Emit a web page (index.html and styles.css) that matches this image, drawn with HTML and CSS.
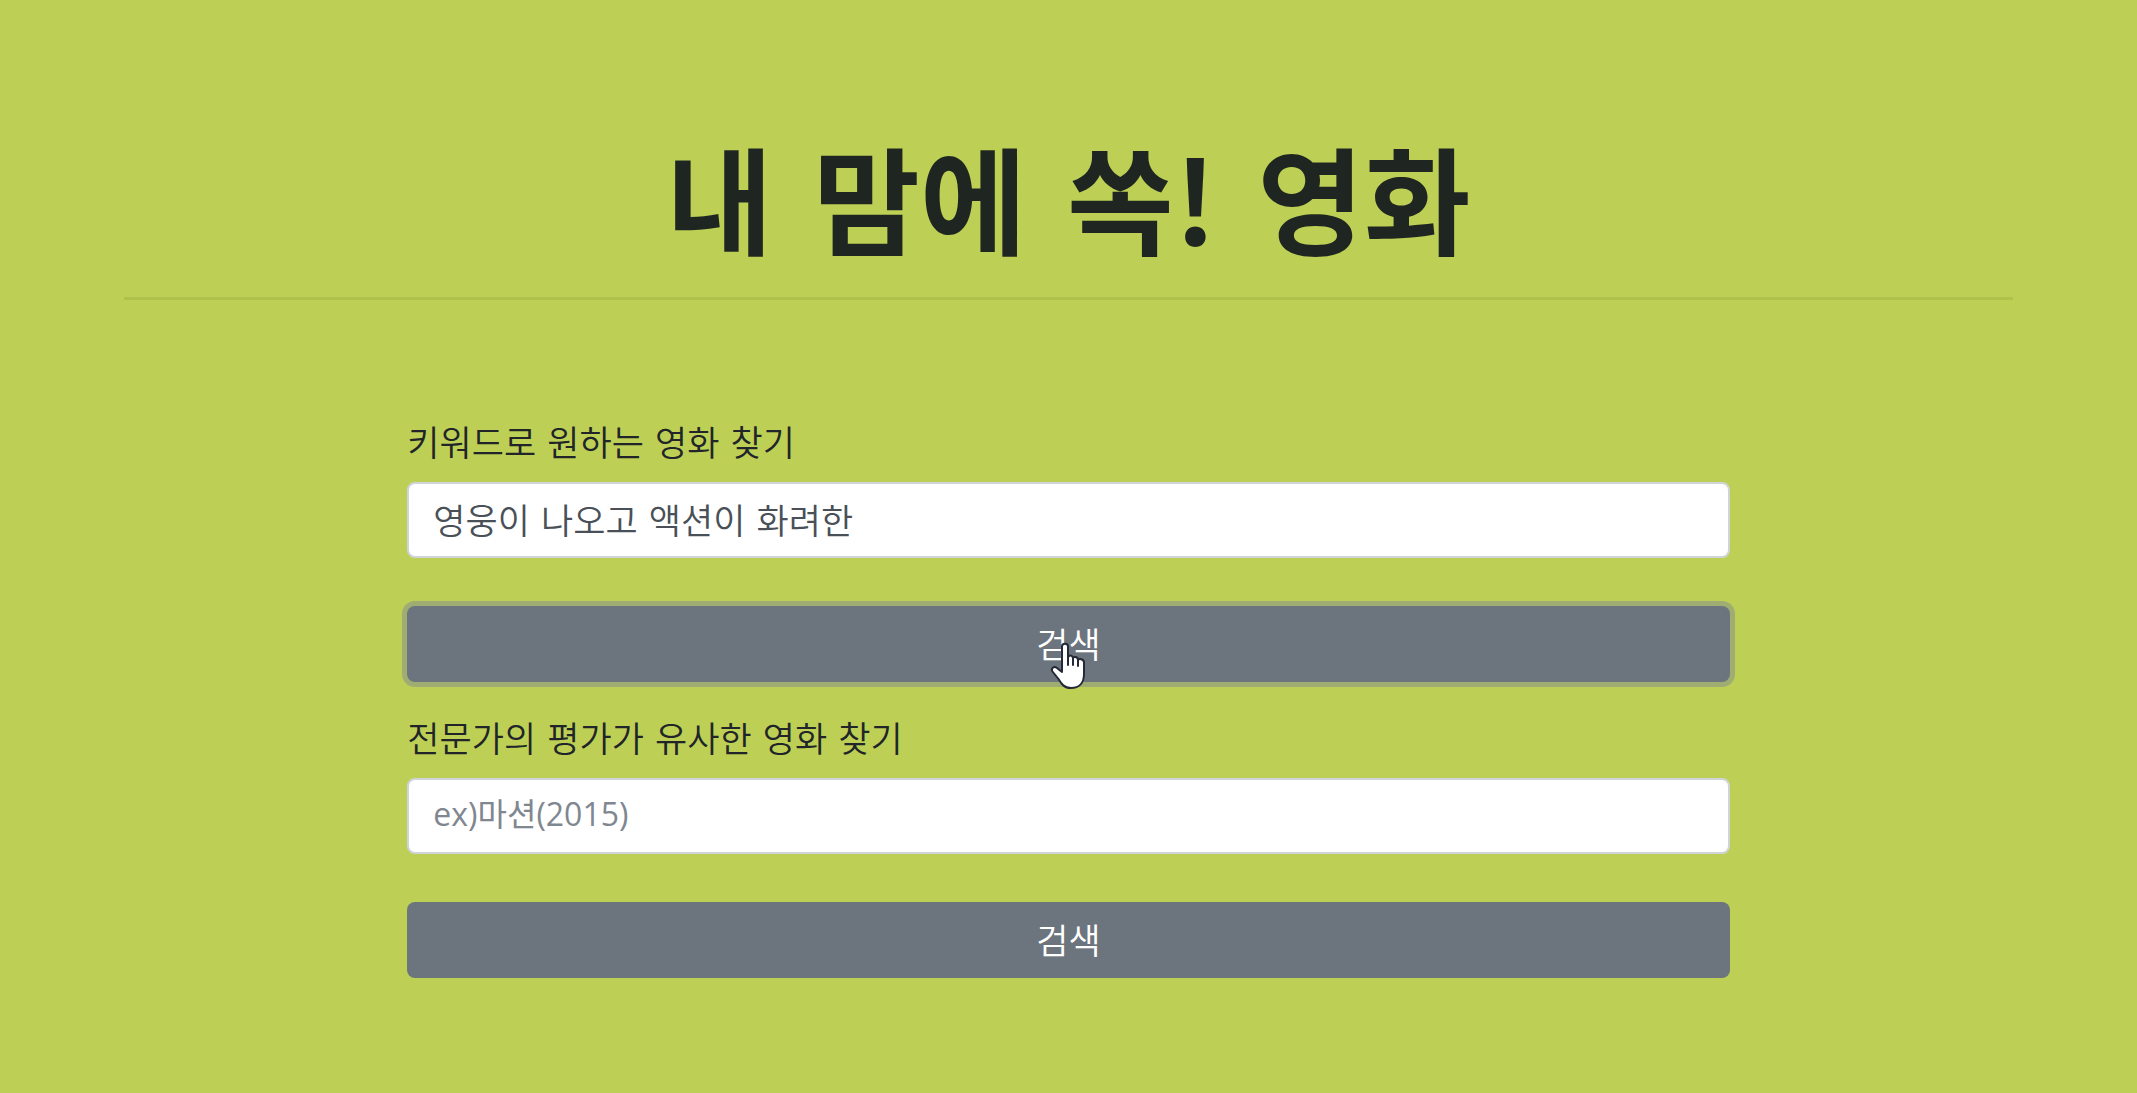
FILE: index.html
```html
<!DOCTYPE html>
<html lang="ko">
<head>
<meta charset="utf-8">
<meta name="viewport" content="width=device-width, initial-scale=1">
<title>내 맘에 쏙! 영화</title>
<link rel="stylesheet" href="styles.css">
</head>
<body>
<main class="page">
  <h1 class="title">내 맘에 쏙<span class="mark">!</span> 영화</h1>
  <hr class="divider">
  <div class="searches">
    <form class="search">
      <label class="label" for="keyword">키워드로 원하는 영화 찾기</label>
      <input class="field" id="keyword" type="text" value="영웅이 나오고 액션이 화려한">
      <button class="button button-focused" type="button">검색
        <svg class="pointer" viewBox="0 0 38 48" aria-hidden="true">
          <path d="M12 4.500C12 .8 18 .8 18 4.500V16C18 12.500 23 13 23 16.500C23.500 14 28 14.500 28 18C29 16 34 17 34 20.500V32C34 41 29 46 21 46C14 46 11.500 42 8.500 37L2.500 29.500C.5 26.500 4 23.500 7 26L12 30Z" fill="#fff" stroke="#252836" stroke-width="2" stroke-linejoin="round"/>
          <path d="M18 15V23M23 16.500V23M28 18V24" fill="none" stroke="#252836" stroke-width="2" stroke-linecap="round"/>
        </svg>
      </button>
    </form>
    <form class="search">
      <label class="label" for="movie">전문가의 평가가 유사한 영화 찾기</label>
      <input class="field" id="movie" type="text" placeholder="ex)마션(2015)">
      <button class="button" type="button">검색</button>
    </form>
  </div>
</main>
</body>
</html>
```
FILE: styles.css
```css
* {
  box-sizing: border-box;
}

body {
  margin: 0;
  min-height: 100vh;
  background: #bdd055;
  color: #212529;
  font-family: "DejaVu Sans", "Noto Sans CJK KR", sans-serif;
  font-size: 35px;
  font-weight: 350;
  line-height: 48px;
}

.page {
  padding: 136px 124px 64px;
}

.title {
  margin: 0;
  color: #1f2622;
  font-size: 116px;
  line-height: 140px;
  font-weight: 700;
  text-align: center;
}

.mark {
  font-family: "Noto Sans CJK KR", sans-serif;
  line-height: 1;
}

.divider {
  height: 3px;
  margin: 21px 0 0;
  border: 0;
  background: #afc14b;
}

.searches {
  display: flex;
  flex-direction: column;
  gap: 34px;
  width: 70%;
  margin: 120px auto 0;
}

.search {
  display: flex;
  flex-direction: column;
}

.label {
  margin-bottom: 14px;
}

.field {
  width: 100%;
  height: 76px;
  margin-bottom: 48px;
  padding: 0 24px 4px;
  border: 2px solid #ced4da;
  border-radius: 8px;
  background: #fff;
  color: #495057;
  font: inherit;
}

.field::placeholder {
  color: #7f8790;
  opacity: 1;
  font-family: "Open Sans", "Noto Sans CJK KR", sans-serif;
  font-size: 32px;
  font-weight: 400;
}

.button {
  position: relative;
  height: 76px;
  padding: 4px 0 0;
  border: 0;
  border-radius: 8px;
  background: #6c757d;
  color: #fff;
  font: inherit;
  cursor: pointer;
}

.button-focused {
  box-shadow: 0 0 0 5px rgba(130, 138, 145, 0.5);
}

/* hand pointer resting on the button */
.pointer {
  position: absolute;
  top: 36px;
  left: calc(50% - 18px);
  width: 38px;
  height: 48px;
}
```
